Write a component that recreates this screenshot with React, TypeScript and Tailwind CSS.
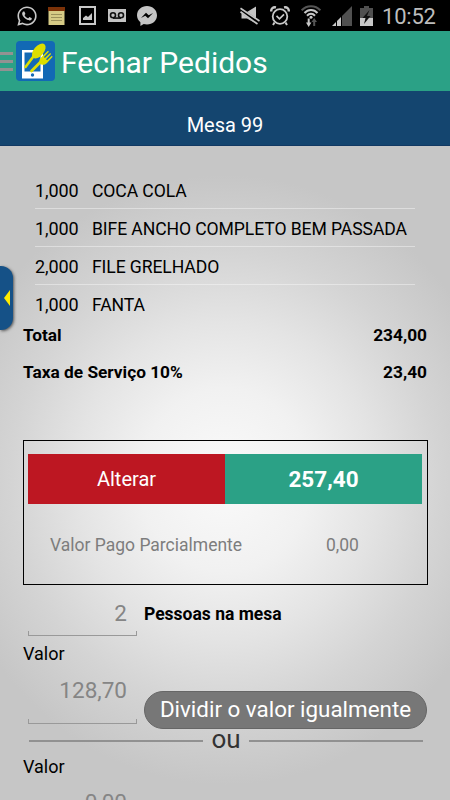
import type { ReactNode } from "react";
import { FaWhatsapp } from "react-icons/fa";

type OrderItem = { qty: string; name: string };

const ITEMS: OrderItem[] = [
  { qty: "1,000", name: "COCA COLA" },
  { qty: "1,000", name: "BIFE ANCHO COMPLETO BEM PASSADA" },
  { qty: "2,000", name: "FILE GRELHADO" },
  { qty: "1,000", name: "FANTA" },
];

function NoteIcon() {
  return (
    <svg width="17" height="18" viewBox="0 0 17 18">
      <rect x="0.5" y="3" width="16" height="15" fill="#d6cb86" />
      <rect width="17" height="4" fill="#7c3208" />
      <path d="M3 7.5h11M3 10.5h11M3 13.5h11" stroke="#9b915b" />
    </svg>
  );
}

function PictureIcon() {
  return (
    <svg width="17" height="19" viewBox="0 0 17 19">
      <rect x="1" y="1" width="15" height="17" fill="none" stroke="#c8c8c8" strokeWidth="2" />
      <path d="M4 14V12l3-2.5 2 1.5 4-4v7z" fill="#c8c8c8" />
    </svg>
  );
}

function VoicemailIcon() {
  return (
    <svg width="18" height="13" viewBox="0 0 18 13">
      <rect width="18" height="13" fill="#c4c4c4" />
      <g fill="none" stroke="#111" strokeWidth="1.6">
        <circle cx="5" cy="6.3" r="2.5" />
        <circle cx="13" cy="6.3" r="2.5" />
        <path d="M5 9.1h8" />
      </g>
    </svg>
  );
}

function MessengerIcon() {
  return (
    <svg width="20" height="20" viewBox="0 0 20 20">
      <path d="M10 0C4.4 0 0 4 0 9.3c0 2.900 1.300 5.300 3.400 7V20l3.300-1.900c1 .3 2.100.5 3.300.5 5.600 0 10-4 10-9.300S15.600 0 10 0z" fill="#c4c4c4" />
      <path d="M4 12l5-5.300 2.700 2.600L16 7l-5 5.300-2.700-2.600z" fill="#000" />
    </svg>
  );
}

function MuteIcon() {
  return (
    <svg width="20" height="20" viewBox="0 0 20 20">
      <path d="M1.500 6H7L16 .5v17L7 12.500H1.500z" fill="#c4c4c4" />
      <path d="M0 3.500L19 17" stroke="#000" strokeWidth="4.200" />
      <path d="M.5 2.300L19.500 15M.5 5.800L17.500 18" stroke="#c4c4c4" strokeWidth="1.700" />
    </svg>
  );
}

function AlarmIcon() {
  return (
    <svg width="20" height="20" viewBox="0 0 20 20" fill="none" stroke="#c8c8c8">
      <circle cx="10" cy="10.5" r="7.3" strokeWidth="1.8" />
      <path d="M1.2 5.5C1 2.5 3 .8 6 1.4M18.8 5.5C19 2.5 17 .8 14 1.4" strokeWidth="2.4" />
      <path d="M6.500 9.800l3 3 4.500-4.500" strokeWidth="1.700" />
      <path d="M4.5 16.5L3 19M15.5 16.5L17 19" strokeWidth="2" />
    </svg>
  );
}

function WifiIcon() {
  return (
    <svg width="20" height="22" viewBox="0 0 20 22" fill="none">
      <path d="M.7 5.3C5.5-.2 14.5-.2 19.3 5.3" stroke="#555" strokeWidth="2" />
      <path d="M3.500 8C7 4 13 4 16.500 8M6 10.700c2.300-2.500 5.700-2.500 8 0" stroke="#c8c8c8" strokeWidth="2" />
      <circle cx="10" cy="12.3" r="1.500" fill="#c8c8c8" />
      <path d="M6.700 13.500h2v4h1.700L7.700 22 5 17.500h1.700z" fill="#c8c8c8" />
      <path d="M13.200 13l2.800 4h-1.800v4h-2v-4h-1.700z" fill="#555" />
    </svg>
  );
}

function SignalIcon() {
  return (
    <svg width="20" height="20" viewBox="0 0 20 20">
      <path d="M10 20V10L20 0v20z" fill="#505050" />
      <path d="M0 20l4-4v4zM5 20v-5l4-4v9z" fill="#c8c8c8" />
    </svg>
  );
}

function BatteryIcon() {
  return (
    <svg width="13" height="20" viewBox="0 0 13 20">
      <path d="M4 0h5v2h4v10H0V2h4z" fill="#505050" />
      <path d="M0 12h13v8H0z" fill="#c8c8c8" />
      <path d="M9.500 4L2.500 12h3L4 18l6.500-8H7z" fill="#111" />
    </svg>
  );
}

function AppLogo() {
  return (
    <svg width="39" height="40" viewBox="0 0 39 40">
      <rect width="39" height="40" rx="4" fill="#1269b5" />
      <path d="M6 9h21v28.500H6z" fill="#fff" />
      <path d="M8.500 11.500H24.500V30.500H8.500z" fill="#1269b5" />
      <circle cx="16.500" cy="34" r="1.700" fill="#1269b5" />
      <ellipse cx="22.800" cy="10" rx="5" ry="8.800" transform="rotate(40 22.800 10)" fill="#dddf00" />
      <path d="M18.500 14L9.500 26" stroke="#dddf00" strokeWidth="2.600" strokeLinecap="round" />
      <path d="M25 20.500L15.500 30" stroke="#dddf00" strokeWidth="2.800" strokeLinecap="round" />
      <path d="M23.500 20.500c-.5-2 1-3.500 2.500-5L32 9.800l.9.900-5 5.300 1 1 5.300-5 .9.900-5 5.300 1 1 4.700-4.400.9.900-5.700 6.300c-2.500 2.300-5 2.500-7.500.500z" fill="#dddf00" />
    </svg>
  );
}

function StatusBar() {
  return (
    <div className="flex h-[31px] shrink-0 items-center justify-between bg-black pl-4 pr-[14px]">
      <div className="flex items-center">
        <FaWhatsapp size={22} color="#c8c8c8" />
        <div className="ml-[10px] flex items-center gap-[14px]">
          <NoteIcon />
          <PictureIcon />
        </div>
        <div className="ml-3 flex items-center gap-[11px]">
          <VoicemailIcon />
          <MessengerIcon />
        </div>
      </div>
      <div className="flex items-center">
        <MuteIcon />
        <div className="ml-[10px] flex items-center gap-[11px]">
          <AlarmIcon />
          <WifiIcon />
          <SignalIcon />
        </div>
        <div className="ml-2">
          <BatteryIcon />
        </div>
        <span className="ml-[9px] w-[54px] whitespace-nowrap pt-[3px] text-[22px] leading-none tracking-[-0.2px] text-[#bdbdbd]">10:52</span>
      </div>
    </div>
  );
}

// Holo-style text input: an underline with short ticks at both ends
function Field({ children, className }: { children: ReactNode; className: string }) {
  return (
    <div className={`ml-[5px] flex w-[109px] shrink-0 flex-col justify-between text-right text-[22.5px] leading-[27px] text-[#858585] ${className}`}>
      <span className="pr-[10px]">{children}</span>
      <span className="h-[5px] border-x border-b border-[#999]" />
    </div>
  );
}

export default function App() {
  return (
    <div className="relative flex h-[800px] w-[450px] flex-col overflow-hidden bg-[radial-gradient(ellipse_285px_305px_at_225px_480px,#fafafa_0%,#f1f1f1_30%,#e4e4e4_52%,#d4d4d4_75%,#c6c6c6_100%)] font-[Roboto,sans-serif] text-black">
      <StatusBar />
      <header className="flex h-[60px] shrink-0 items-center bg-[#2ba186]">
        <div className="flex w-[13px] flex-col gap-[5px]">
          <span className="h-[3px] bg-[#929292]" />
          <span className="h-[3px] bg-[#929292]" />
          <span className="h-[3px] bg-[#929292]" />
        </div>
        <div className="ml-[3px]">
          <AppLogo />
        </div>
        <h1 className="ml-[6px] pt-0.5 text-[30px] text-white">Fechar Pedidos</h1>
      </header>
      <div className="flex h-[55px] shrink-0 items-center justify-center border-b border-[#123963] bg-[#14456f] pt-[13px] text-xl text-white">
        Mesa 99
      </div>

      <main className="px-[23px] pt-[25px]">
        <ul className="mx-3 text-[17.6px] tracking-[-0.1px]">
          {ITEMS.map((item) => (
            <li key={item.name} className="flex h-[38px] items-baseline border-b border-white/40 pt-1.5 last:h-[37px] last:border-0">
              <span className="w-[57px] text-[18px]">{item.qty}</span>
              <span className="whitespace-nowrap">{item.name}</span>
            </li>
          ))}
        </ul>
        <div className="flex h-[27px] items-center justify-between text-[17.3px] font-bold">
          <span>Total</span>
          <span>234,00</span>
        </div>
        <div className="mt-[5px] flex h-[37px] items-center justify-between text-[17.3px] font-bold">
          <span>Taxa de Serviço 10%</span>
          <span>23,40</span>
        </div>

        <section className="mt-[49px] h-[145px] w-[405px] border border-black pl-1 pr-[5px] pt-[13px]">
          <div className="flex h-[50px] items-center text-center text-white">
            <button className="h-full flex-1 bg-[#bd1722] text-xl">Alterar</button>
            <span className="flex h-full flex-1 items-center justify-center bg-[#2ba186] pt-px text-[22.5px] font-bold">257,40</span>
          </div>
          <div className="flex h-[82px] items-center pl-[22px] text-[17.5px] text-[#7d7d7d]">
            <span className="w-[276px]">Valor Pago Parcialmente</span>
            <span>0,00</span>
          </div>
        </section>

        <div className="flex">
          <Field className="mt-[15px] h-[36px]">2</Field>
          <span className="ml-[7px] mt-[16px] text-[17.5px] font-bold">Pessoas na mesa</span>
        </div>
        <p className="mt-1 text-[18px] leading-[27px]">Valor</p>
        <div className="flex">
          <Field className="mt-[10px] h-[47px]">128,70</Field>
          <button className="ml-[7px] mt-[24px] h-[38px] w-[283px] shrink-0 whitespace-nowrap rounded-full border border-[#666] bg-[#777] text-[22.4px] text-white">
            Dividir o valor igualmente
          </button>
        </div>
        <div className="-mt-px ml-[6px] mr-1 flex h-[26px] items-center gap-2 text-[26px] leading-none text-[#333]">
          <span className="h-0.5 flex-1 bg-[#919191]" />
          <span className="pb-1">ou</span>
          <span className="h-0.5 flex-1 bg-[#919191]" />
        </div>
        <p className="-mt-px text-[18px] leading-[27px]">Valor</p>
        <Field className="mt-[9px] h-[46px]">0,00</Field>
      </main>

      {/* Handle of the side drawer */}
      <div className="absolute left-0 top-[266px] flex h-16 w-[13px] items-center justify-center rounded-r-xl bg-[#155187] shadow-[1px_1px_3px_#555]">
        <svg width="6" height="16" viewBox="0 0 6 16">
          <path d="M6 0L0 8l6 8z" fill="#ffeb00" />
        </svg>
      </div>
    </div>
  );
}
